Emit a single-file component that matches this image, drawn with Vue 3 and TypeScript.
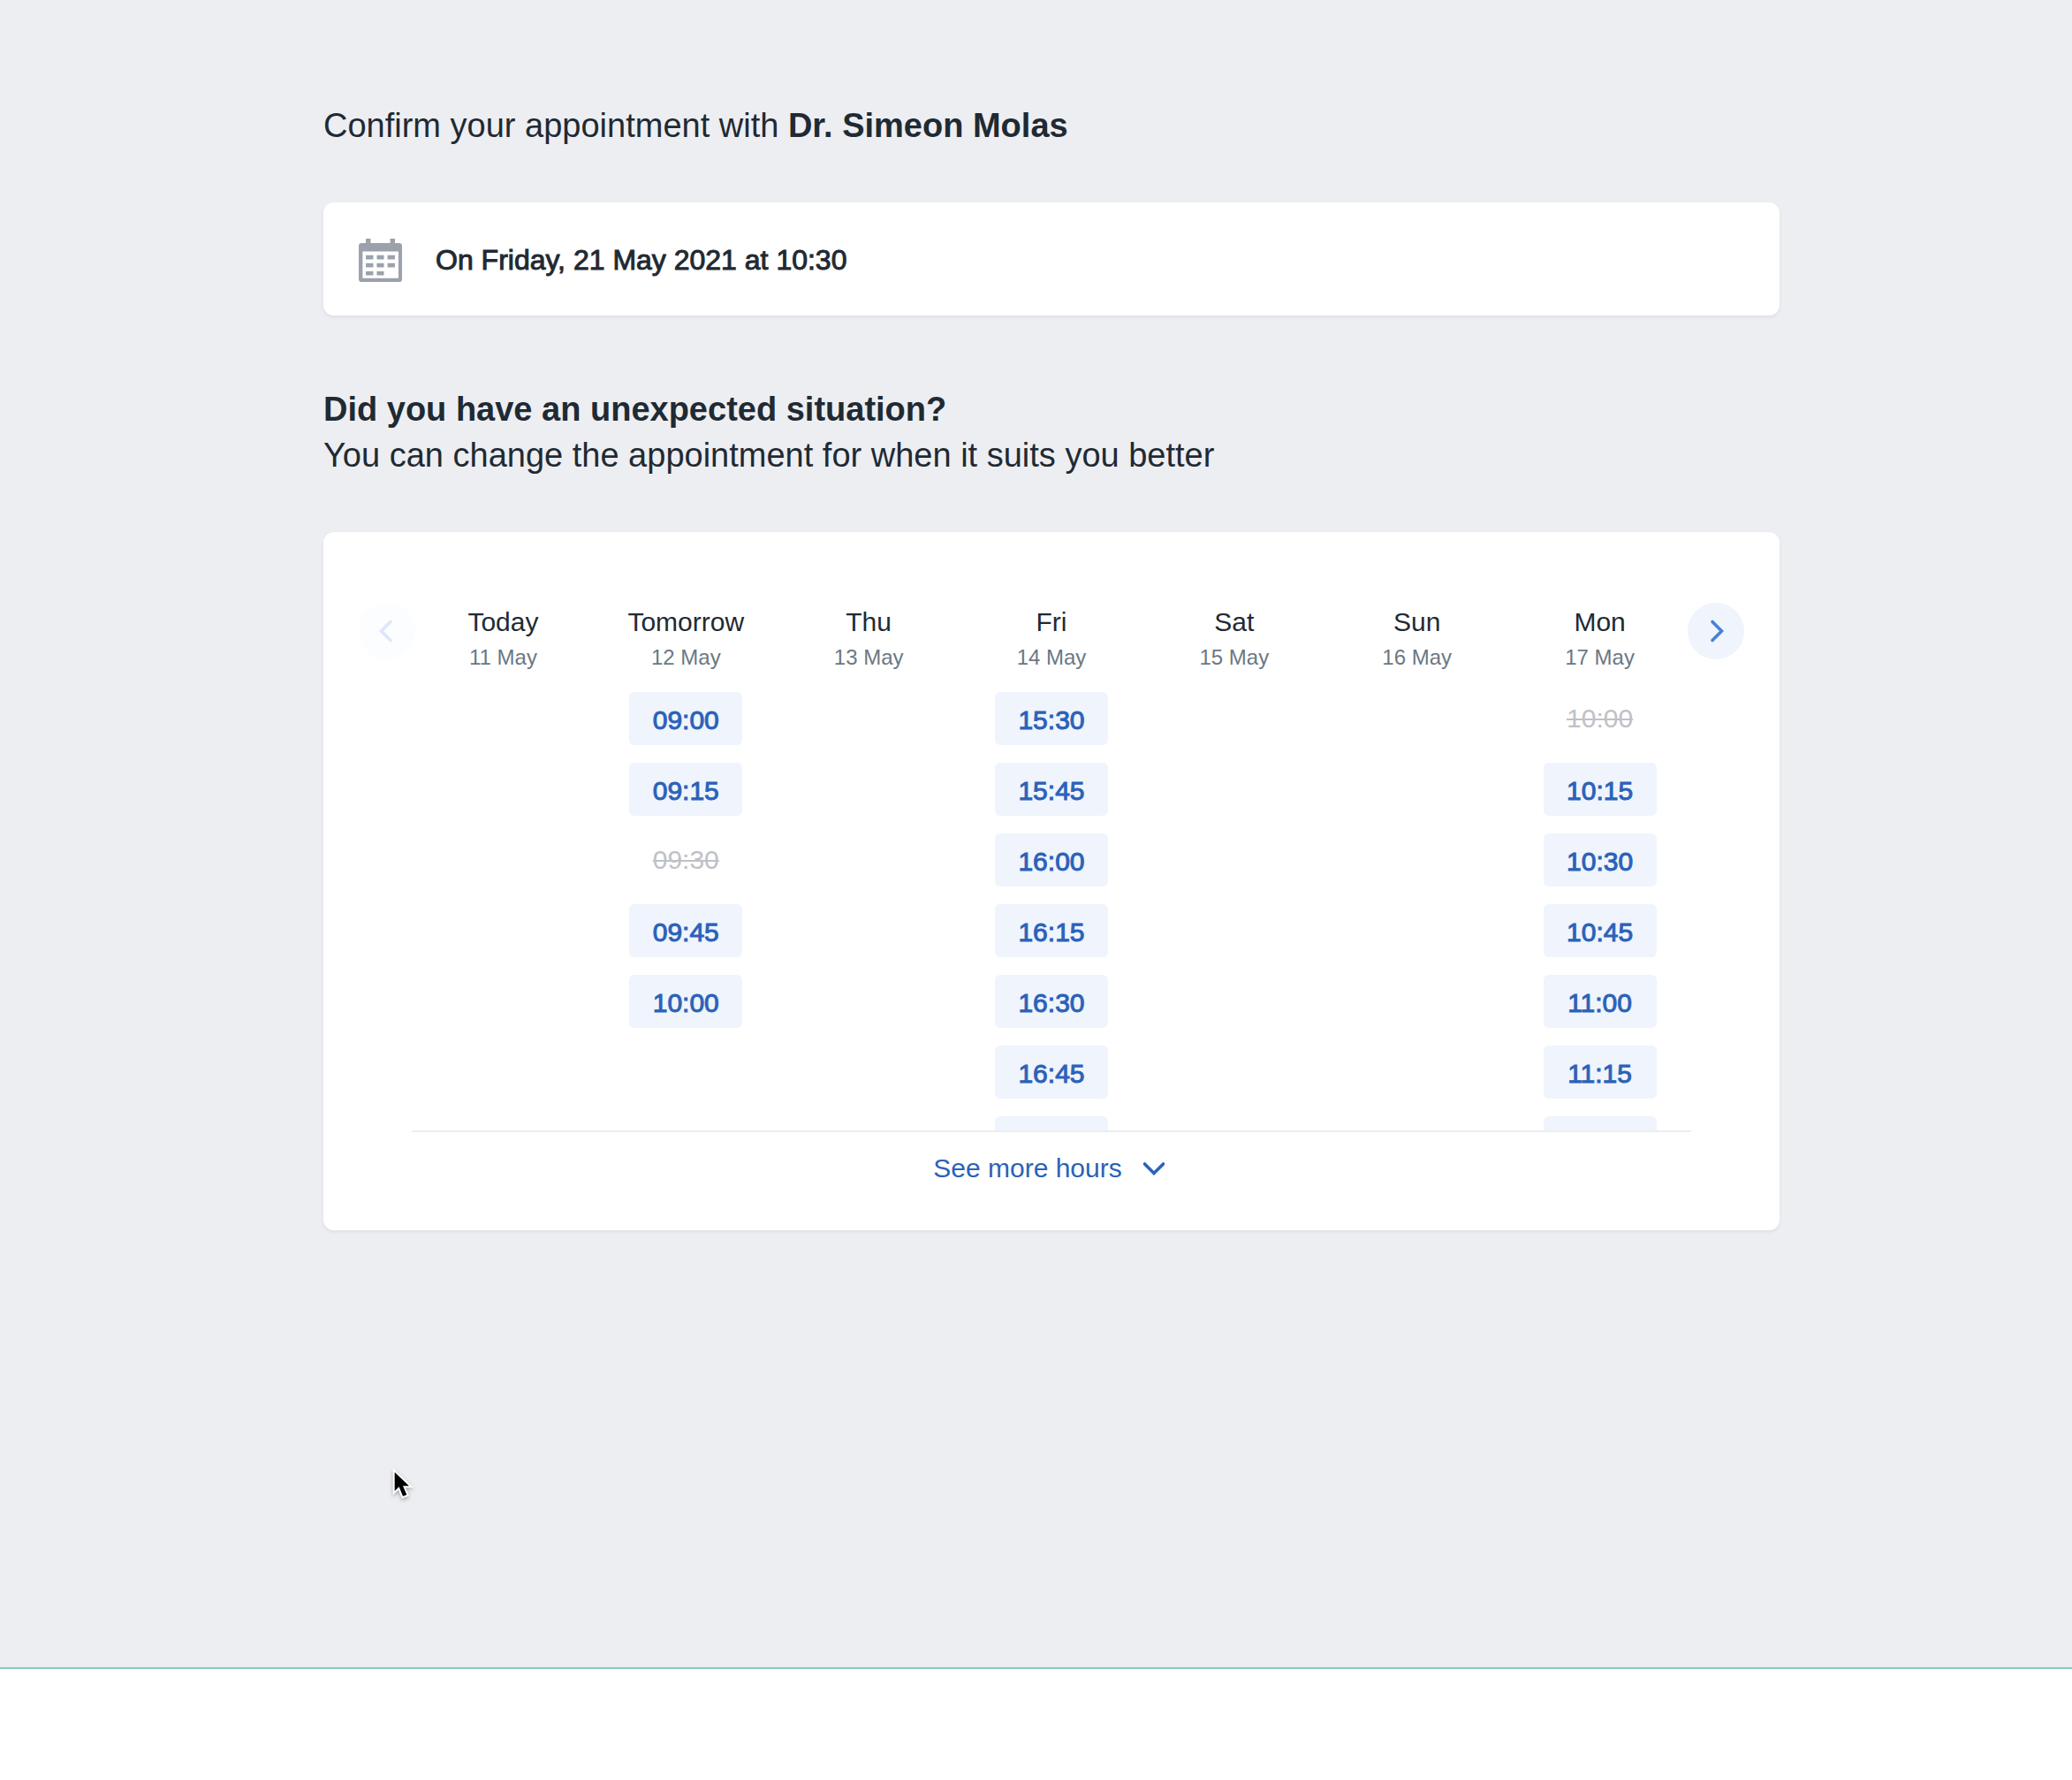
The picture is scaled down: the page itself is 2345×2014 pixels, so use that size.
<script setup lang="ts">
interface Slot {
  time: string
  taken?: boolean
  peek?: boolean
}

interface Day {
  name: string
  date: string
  slots: Slot[]
}

const open = (...times: string[]): Slot[] => times.map((time) => ({ time }))

// A slot marked "peek" only shows its top edge above the fold, without its label.
const days: Day[] = [
  { name: 'Today', date: '11 May', slots: [] },
  {
    name: 'Tomorrow',
    date: '12 May',
    slots: [...open('09:00', '09:15'), { time: '09:30', taken: true }, ...open('09:45', '10:00')],
  },
  { name: 'Thu', date: '13 May', slots: [] },
  {
    name: 'Fri',
    date: '14 May',
    slots: [...open('15:30', '15:45', '16:00', '16:15', '16:30', '16:45'), { time: 'More hours', peek: true }],
  },
  { name: 'Sat', date: '15 May', slots: [] },
  { name: 'Sun', date: '16 May', slots: [] },
  {
    name: 'Mon',
    date: '17 May',
    slots: [
      { time: '10:00', taken: true },
      ...open('10:15', '10:30', '10:45', '11:00', '11:15'),
      { time: 'More hours', peek: true },
    ],
  },
]
</script>

<template>
  <div class="page">
    <main class="content">
      <h1 class="title">Confirm your appointment with <strong>Dr. Simeon Molas</strong></h1>

      <section class="card summary">
        <svg class="calendar-icon" viewBox="0 0 146 146" aria-hidden="true">
          <path
            fill-rule="evenodd"
            d="M24 0h16v15h66V0h16v15h14a10 10 0 0 1 10 10v111a10 10 0 0 1-10 10H10a10 10 0 0 1-10-10V25a10 10 0 0 1 10-10h14zM13 43v90h121V43z"
          />
          <path
            d="M24 56h25v14H24zM61 56h24v14H61zM97 56h25v14H97zM24 83h25v14H24zM61 83h24v14H61zM97 83h25v14H97zM24 110h25v14H24zM61 110h24v14H61z"
          />
        </svg>
        <p class="summary-text">On Friday, 21 May 2021 at 10:30</p>
      </section>

      <h2 class="subtitle">Did you have an unexpected situation?</h2>
      <p class="lead">You can change the appointment for when it suits you better</p>

      <section class="card schedule">
        <div class="week">
          <button class="nav" type="button" aria-label="Previous days" disabled>
            <svg viewBox="0 0 64 64" aria-hidden="true"><path d="M36 21.5 25.5 32 36 42.5" /></svg>
          </button>
          <div class="days">
            <div v-for="day in days" :key="day.date" class="day">
              <h3 class="day-name">{{ day.name }}</h3>
              <p class="day-date">{{ day.date }}</p>
              <ul class="slots">
                <li v-for="slot in day.slots" :key="slot.time">
                  <button v-if="slot.peek" class="slot" type="button" :aria-label="slot.time"></button>
                  <button v-else class="slot" type="button" :disabled="slot.taken">{{ slot.time }}</button>
                </li>
              </ul>
            </div>
          </div>
          <button class="nav" type="button" aria-label="Next days">
            <svg viewBox="0 0 64 64" aria-hidden="true"><path d="M28 21.5 38.5 32 28 42.5" /></svg>
          </button>
        </div>
        <div class="more">
          <button class="more-button" type="button">
            See more hours
            <svg class="more-icon" viewBox="0 0 36 36" aria-hidden="true"><path d="M7.5 13 18 23.5 28.5 13" /></svg>
          </button>
        </div>
      </section>
    </main>

    <footer class="footer"></footer>

    <svg class="pointer" viewBox="66 54 84 120" aria-hidden="true">
      <path d="M80 77v64l15-14 13 32 13-5-13-30h21z" />
    </svg>
  </div>
</template>

<style>
body {
  margin: 0;
}
</style>

<style scoped>
.page {
  position: relative;
  display: flex;
  flex-direction: column;
  min-height: 100vh;
  background: #edeef2;
  color: #1f2a33;
  font-family: "Liberation Sans", Arial, sans-serif;
}

h1,
h2,
h3,
p,
ul {
  margin: 0;
  padding: 0;
}

button {
  border: 0;
  padding: 0;
  background: none;
  font: inherit;
}

.content {
  flex: 1;
  padding: 116px 331px 80px 366px;
}

.title,
.subtitle,
.lead {
  font-size: 38px;
  line-height: 52px;
}

.title {
  margin-bottom: 61px;
  font-weight: 400;
}

.lead {
  margin-bottom: 61px;
}

.card {
  border-radius: 12px;
  background: #fff;
  box-shadow: 0 2px 4px rgba(31, 42, 51, 0.07);
}

.summary {
  display: flex;
  align-items: center;
  gap: 38px;
  min-height: 128px;
  margin-bottom: 80px;
  padding: 2px 40px 0;
  box-sizing: border-box;
}

.calendar-icon {
  width: 49px;
  height: 49px;
  fill: #9ba2ac;
}

.summary-text {
  font-size: 32px;
  line-height: 40px;
  -webkit-text-stroke: 1px currentColor;
}

.schedule {
  padding: 80px 40px 29px;
}

.week {
  display: flex;
  align-items: flex-start;
}

.nav {
  flex: none;
  width: 64px;
  height: 64px;
  border-radius: 50%;
  background: #eff4fd;
  color: #4a80d6;
}

.nav:disabled {
  background: #fcfdff;
  color: #dde7f7;
}

.nav svg {
  display: block;
}

.nav path,
.more-icon path {
  fill: none;
  stroke: currentColor;
  stroke-width: 3.6;
  stroke-linecap: round;
  stroke-linejoin: miter;
}

.days {
  display: grid;
  flex: 1;
  grid-template-columns: repeat(7, 1fr);
  margin: 0 -4px;
  padding-top: 2px;
  text-align: center;
}

.day-name {
  margin-bottom: 4px;
  font-size: 30px;
  font-weight: 400;
  line-height: 40px;
}

.day-date {
  margin-bottom: 23px;
  color: #6b7883;
  font-size: 24px;
  line-height: 32px;
}

.slots {
  display: flex;
  flex-direction: column;
  align-items: center;
  gap: 20px;
  height: 496px;
  overflow: hidden;
  list-style: none;
}

.slot {
  display: block;
  width: 128px;
  height: 60px;
  padding-top: 4px;
  border-radius: 6px;
  background: #eff4fd;
  color: #2b62b9;
  font-size: 30px;
  -webkit-text-stroke: 1px currentColor;
}

.slot:disabled {
  padding-top: 0;
  background: none;
  color: #bfc1c7;
  text-decoration: line-through;
  text-decoration-thickness: 2px;
  -webkit-text-stroke: 0;
}

.more {
  display: flex;
  justify-content: center;
  margin: 0 60px;
  border-top: 2px solid #ebedf1;
}

.more-button {
  display: flex;
  align-items: center;
  gap: 18px;
  height: 82px;
  color: #2b62b9;
  font-size: 30px;
}

.more-icon {
  width: 36px;
  height: 36px;
}

.footer {
  height: 127px;
  border-top: 1px solid #b3e0db;
  background: #fff;
  box-shadow: inset 0 1px #55b3a6;
}

.pointer {
  position: absolute;
  top: 1658px;
  left: 442px;
  width: 28px;
  height: 40px;
  filter: drop-shadow(0 2px 2px rgba(0, 0, 0, 0.3));
}

.pointer path {
  fill: #000;
  stroke: #fff;
  stroke-width: 12;
  paint-order: stroke;
}
</style>
